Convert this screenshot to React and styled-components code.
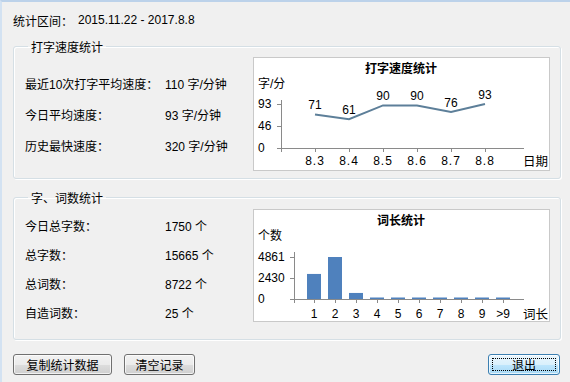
import React from "react";
import styled, { createGlobalStyle } from "styled-components";

const GlobalStyle = createGlobalStyle`
  html, body { margin: 0; padding: 0; background: #f0f0f0; }
  body { font-family: "Liberation Sans", "Noto Sans CJK SC", sans-serif; font-size: 12px; color: #000; }
`;

const CJK = `"Liberation Sans", "Noto Sans CJK SC", sans-serif`;

const speedRows = [
  { label: "最近10次打字平均速度：", value: "110 字/分钟" },
  { label: "今日平均速度：", value: "93 字/分钟" },
  { label: "历史最快速度：", value: "320 字/分钟" },
];

const countRows = [
  { label: "今日总字数：", value: "1750 个" },
  { label: "总字数：", value: "15665 个" },
  { label: "总词数：", value: "8722 个" },
  { label: "自造词数：", value: "25 个" },
];

const speedData = [
  { day: "8.3", v: 71 },
  { day: "8.4", v: 61 },
  { day: "8.5", v: 90 },
  { day: "8.6", v: 90 },
  { day: "8.7", v: 76 },
  { day: "8.8", v: 93 },
];

const lenData = [
  { k: "1", v: 2900 },
  { k: "2", v: 4861 },
  { k: "3", v: 700 },
  { k: "4", v: 150 },
  { k: "5", v: 150 },
  { k: "6", v: 150 },
  { k: "7", v: 150 },
  { k: "8", v: 150 },
  { k: "9", v: 150 },
  { k: ">9", v: 150 },
];

function SpeedChart() {
  const y0 = 90;
  const scale = 44 / 93;
  const xs = speedData.map((_, i) => 61 + i * 34);
  const pts = speedData.map((d, i) => `${xs[i]},${y0 - d.v * scale}`).join(" ");
  return (
    <svg width="295" height="112" style={{ display: "block" }}>
      <g fontFamily={CJK} fontSize="12" fill="#000">
        <text x="147" y="15" textAnchor="middle" fontWeight="bold">打字速度统计</text>
        <text x="4" y="30">字/分</text>
        <text x="4" y="50">93</text>
        <text x="4" y="72">46</text>
        <text x="4" y="94">0</text>
      </g>
      <g stroke="#8a8a8a" strokeWidth="1" shapeRendering="crispEdges">
        <line x1="27.5" y1="42" x2="27.5" y2="94" />
        <line x1="23" y1="90.5" x2="270" y2="90.5" />
        <line x1="23" y1="46.5" x2="27" y2="46.5" />
        <line x1="23" y1="68.5" x2="27" y2="68.5" />
        {xs.map((x) => (
          <line key={x} x1={x + 0.5} y1="90" x2={x + 0.5} y2="94" />
        ))}
      </g>
      <polyline points={pts} fill="none" stroke="#5d7f99" strokeWidth="2" />
      <g fontFamily={CJK} fontSize="12" fill="#000" textAnchor="middle">
        {speedData.map((d, i) => (
          <text key={d.day} x={xs[i]} y={y0 - d.v * scale - 5}>{d.v}</text>
        ))}
        {speedData.map((d, i) => (
          <text key={"x" + d.day} x={xs[i]} y="107" letterSpacing="1">{d.day}</text>
        ))}
      </g>
      <text x="269" y="108" fontFamily={CJK} fontSize="12.5">日期</text>
    </svg>
  );
}

function LengthChart() {
  const y0 = 89;
  const scale = 42 / 4861;
  return (
    <svg width="295" height="111" style={{ display: "block" }}>
      <g fontFamily={CJK} fontSize="12" fill="#000">
        <text x="147" y="15" textAnchor="middle" fontWeight="bold">词长统计</text>
        <text x="4" y="30">个数</text>
        <text x="4" y="51">4861</text>
        <text x="4" y="72">2430</text>
        <text x="4" y="93">0</text>
      </g>
      <g stroke="#8a8a8a" strokeWidth="1" shapeRendering="crispEdges">
        <line x1="40.5" y1="42" x2="40.5" y2="93" />
        <line x1="36" y1="89.5" x2="270" y2="89.5" />
        <line x1="36" y1="47.5" x2="40" y2="47.5" />
        <line x1="36" y1="68.5" x2="40" y2="68.5" />
      </g>
      {lenData.map((d, i) => {
        const h = Math.max(1.5, d.v * scale);
        return <rect key={d.k} x={53 + i * 21} y={y0 - h} width="14" height={h} fill="#4f81bd" />;
      })}
      <g stroke="#8a8a8a" strokeWidth="1" shapeRendering="crispEdges">
        {lenData.map((d, i) => (
          <line key={d.k} x1={60.5 + i * 21} y1="89" x2={60.5 + i * 21} y2="93" />
        ))}
      </g>
      <g fontFamily={CJK} fontSize="12" fill="#000" textAnchor="middle">
        {lenData.map((d, i) => (
          <text key={d.k} x={60 + i * 21} y="108">{d.k}</text>
        ))}
      </g>
      <text x="269" y="109" fontFamily={CJK} fontSize="12.5">词长</text>
    </svg>
  );
}

export default function App() {
  return (
    <>
      <GlobalStyle />
      <Window>
        <Header>
          <span>统计区间：</span>
          <DateRange>2015.11.22 - 2017.8.8</DateRange>
        </Header>
        <GroupBox $mt={10} $pt={2} $pb={7}>
          <Legend>打字速度统计</Legend>
          <GroupBody>
            <StatList $gap={31} $top={11}>
              {speedRows.map((r) => (
                <StatRow key={r.label}>
                  <StatLabel>{r.label}</StatLabel>
                  <StatValue>{r.value}</StatValue>
                </StatRow>
              ))}
            </StatList>
            <ChartBox>
              <SpeedChart />
            </ChartBox>
          </GroupBody>
        </GroupBox>
        <GroupBox $mt={10} $pt={3} $pb={12}>
          <Legend>字、词数统计</Legend>
          <GroupBody>
            <StatList $gap={29} $top={2}>
              {countRows.map((r) => (
                <StatRow key={r.label}>
                  <StatLabel>{r.label}</StatLabel>
                  <StatValue>{r.value}</StatValue>
                </StatRow>
              ))}
            </StatList>
            <ChartBox>
              <LengthChart />
            </ChartBox>
          </GroupBody>
        </GroupBox>
        <Footer>
          <Button $w={99}>复制统计数据</Button>
          <Button $w={71}>清空记录</Button>
          <Spacer />
          <Button $w={72} $focused>
            <FocusRing>退出</FocusRing>
          </Button>
        </Footer>
      </Window>
    </>
  );
}

const Window = styled.div`
  box-sizing: border-box;
  width: 570px;
  height: 382px;
  background: #f0f0f0;
  border-top: 2px solid #bcd2ea;
  border-left: 2px solid #d3e2f2;
  padding: 0 9px 0 11px;
  display: flex;
  flex-direction: column;
`;

const Header = styled.div`
  height: 16px;
  margin-top: 10px;
  display: flex;
  align-items: center;
  font-family: "Noto Sans CJK SC", sans-serif;
  font-size: 12px;
`;

const DateRange = styled.span`
  margin-left: 5px;
  font-family: "Liberation Sans", sans-serif;
  font-size: 12px;
`;

const GroupBox = styled.fieldset`
  margin: ${(p) => p.$mt}px 0 0 0;
  padding: ${(p) => p.$pt}px 10px ${(p) => p.$pb}px 11px;
  border: 1px solid #d5dfe5;
  border-radius: 3px;
  box-shadow: inset 1px 1px 0 #fff, 1px 1px 0 #fff;
  min-width: 0;
`;

const Legend = styled.legend`
  padding: 0 3px;
  margin-left: 3px;
  font-family: "Noto Sans CJK SC", sans-serif;
  font-size: 12px;
  line-height: 17px;
  height: 17px;
`;

const GroupBody = styled.div`
  display: flex;
  align-items: flex-start;
`;

const StatList = styled.div`
  width: 228px;
  padding-top: ${(p) => p.$top}px;
  display: grid;
  grid-auto-rows: ${(p) => p.$gap}px;
`;

const StatRow = styled.div`
  display: flex;
  align-items: center;
`;

const StatLabel = styled.span`
  width: 140px;
  font-family: ${CJK};
  font-size: 12px;
`;

const StatValue = styled.span`
  font-family: ${CJK};
  font-size: 12px;
`;

const ChartBox = styled.div`
  border: 1px solid #c9c9c9;
  background: #fff;
`;

const Footer = styled.div`
  margin-top: 14px;
  display: flex;
  align-items: center;
  gap: 12px;
`;

const Spacer = styled.div`
  flex: 1;
`;

const Button = styled.button`
  box-sizing: border-box;
  width: ${(p) => p.$w}px;
  height: 21px;
  padding: 0;
  margin-right: ${(p) => (p.$focused ? 1 : 0)}px;
  border: 1px solid ${(p) => (p.$focused ? "#3c7fb1" : "#707070")};
  border-radius: 3px;
  background: ${(p) =>
    p.$focused
      ? "linear-gradient(#eaf6fd 0%, #d9f0fc 50%, #bee6fd 51%, #a7d9f5 100%)"
      : "linear-gradient(#f2f2f2 0%, #ebebeb 50%, #dddddd 51%, #cfcfcf 100%)"};
  box-shadow: inset 0 0 0 1px rgba(255, 255, 255, 0.7);
  font-family: "Noto Sans CJK SC", sans-serif;
  font-size: 12px;
  color: #000;
  display: flex;
  align-items: center;
  justify-content: center;
`;

const FocusRing = styled.span`
  box-sizing: border-box;
  width: calc(100% - 6px);
  height: calc(100% - 6px);
  border: 1px dotted #000;
  display: flex;
  align-items: center;
  justify-content: center;
`;
